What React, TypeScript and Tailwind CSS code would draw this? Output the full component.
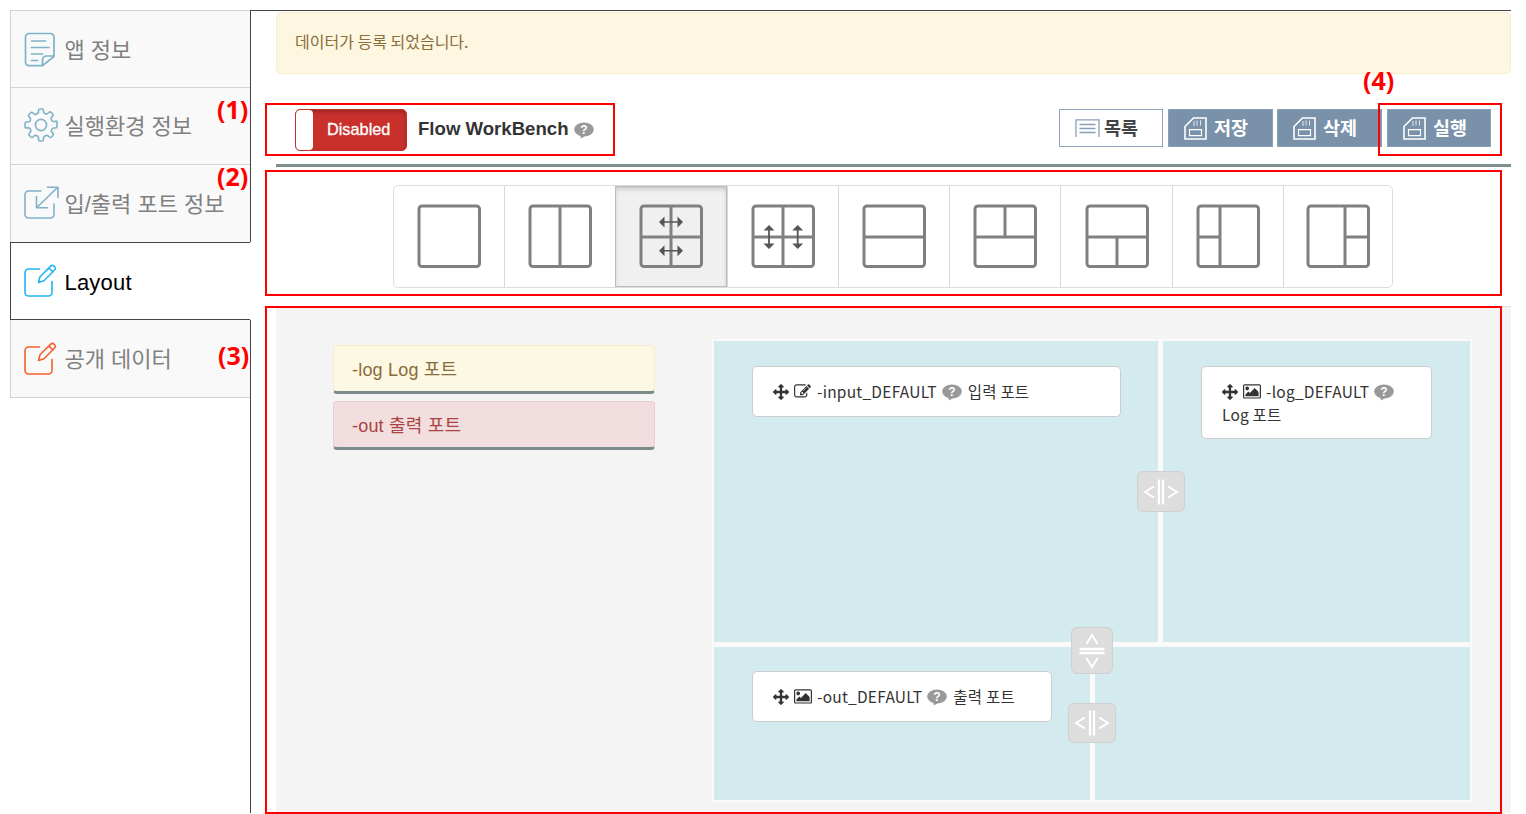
import React from "react";

const KR = "font-['Liberation_Sans','Noto_Sans_CJK_KR',sans-serif]";
const KR2 = "font-['Noto_Sans_CJK_KR',sans-serif]";

function NoteIcon() {
  return (
    <svg width="32" height="36" viewBox="0 0 32 36" fill="none" stroke="#7fb2c8" strokeWidth="1.7" strokeLinecap="round" strokeLinejoin="round" className="mt-[2px]">
      <path d="M30 21V5a3.500 3.500 0 0 0-3.500-3.500H5A3.500 3.500 0 0 0 1.500 5v25A3.500 3.500 0 0 0 5 33.700h13.500L30 24.500V21" />
      <path d="M18.500 33.500v-5.500a4 4 0 0 1 4-4H30" />
      <path d="M7.500 9h14M7.500 15.500h17.500M7.500 22h11M7.500 28.500h6" />
    </svg>
  );
}

function GearIcon() {
  return (
    <svg width="34" height="34" viewBox="0 0 34 34" fill="none" stroke="#7fb2c8" strokeWidth="1.6" strokeLinejoin="round" className="-mt-[2px]">
      <circle cx="17" cy="17" r="5.600" />
      <path d="M14.500 2.500Q14.500 1 16 1h2q1.500 0 1.500 1.500v1.300q.3 1.200 1.500 1.700 1.600.9 2.900-.2l1-1q1-1 2.100 0l1.700 1.700q1 1 0 2.100l-1 1q-1.100 1.300-.2 2.900.5 1.200 1.700 1.500h1.800Q33 12.500 33 14.500v4q0 1.500-1.500 1.500h-1.800q-1.500.3-2 1.500-.9 1.600.2 2.900l1 1q1 1 0 2.100l-1.500 1.500q-1 1-2.100 0l-1-1q-1.300-1.100-2.900-.2-1.500.5-1.900 1.700v2Q19.500 33 18 33h-2q-1.500 0-1.500-1.500v-2q-.4-1.200-1.600-1.700-1.600-.9-2.900.2l-1 1q-1 1-2.100 0l-1.600-1.600q-1-1 0-2.100l1-1q1.100-1.300.2-2.900-.5-1.200-1.700-1.500H2.500Q1 20 1 18.500v-3Q1 14 2.500 14h2q1.200-.3 1.700-1.500.9-1.600-.2-2.900l-1-1q-1-1 0-2.100l1.700-1.700q1-1 2.100 0l1 1q1.300 1.100 2.900.2 1.200-.5 1.800-1.700z" />
    </svg>
  );
}

function PortIcon() {
  return (
    <svg width="36" height="34" viewBox="0 0 36 34" fill="none" stroke="#7fb2c8" strokeWidth="1.600" strokeLinecap="round" strokeLinejoin="round" className="-mt-[2px]">
      <path d="M17 5H4.500A3.500 3.500 0 0 0 1 8.500v20A3.500 3.500 0 0 0 4.500 32h22A3.500 3.500 0 0 0 30 28.500V18" />
      <path d="M33.500 1.500 12.800 21.500M23.500 1.300H34v10M12.500 10.500v11.300h11" />
    </svg>
  );
}

function PencilIcon({ color }: { color: string }) {
  return (
    <svg width="34" height="34" viewBox="0 0 34 34" fill="none" stroke={color} strokeWidth="1.600" strokeLinecap="round" strokeLinejoin="round">
      <path d="M15.500 5H4.500A3.500 3.500 0 0 0 1 8.500v20A3.500 3.500 0 0 0 4.500 32h20a3.500 3.500 0 0 0 3.500-3.500V17.500" />
      <path d="M14.500 18.500 16 12.700 26.700 2.100a2.300 2.300 0 0 1 3.300 0l.6.6a2.300 2.300 0 0 1 0 3.300L20 16.700zM25 4l4 4" />
    </svg>
  );
}

function HelpBubble({ className = "" }: { className?: string }) {
  return (
    <svg width="20" height="17" viewBox="0 0 20 17" className={className}>
      <ellipse cx="10" cy="7.500" rx="9.800" ry="7" fill="#999" />
      <path d="M6 13.500 12 12.500Q10 15.500 6.500 16.500 7.500 15 6 13.500z" fill="#999" />
      <text x="10" y="12" textAnchor="middle" fontFamily="Liberation Sans" fontWeight="700" fontSize="12" fill="#fff">?</text>
    </svg>
  );
}

function MoveIcon() {
  return (
    <svg width="16" height="16" viewBox="0 0 1792 1792" fill="#333">
      <path d="M1792 896q0 26-19 45l-256 256q-19 19-45 19t-45-19-19-45v-128h-384v384h128q26 0 45 19t19 45-19 45l-256 256q-19 19-45 19t-45-19l-256-256q-19-19-19-45t19-45 45-19h128v-384h-384v128q0 26-19 45t-45 19-45-19l-256-256q-19-19-19-45t19-45l256-256q19-19 45-19t45 19 19 45v128h384v-384h-128q-26 0-45-19t-19-45 19-45l256-256q19-19 45-19t45 19l256 256q19 19 19 45t-19 45-45 19h-128v384h384v-128q0-26 19-45t45-19 45 19l256 256q19 19 19 45z" />
    </svg>
  );
}

function ImageIcon() {
  return (
    <svg width="18" height="16.800" viewBox="-64 0 1920 1792" fill="#333">
      <path d="M576 576q0 80-56 136t-136 56-136-56-56-136 56-136 136-56 136 56 56 136zm1024 384v448h-1408v-192l320-320 160 160 512-512zm96-704h-1600q-13 0-22.500 9.500t-9.500 22.500v1216q0 13 9.500 22.500t22.500 9.500h1600q13 0 22.500-9.500t9.500-22.500v-1216q0-13-9.500-22.500t-22.500-9.500zm160 32v1216q0 66-47 113t-113 47h-1600q-66 0-113-47t-47-113v-1216q0-66 47-113t113-47h1600q66 0 113 47t47 113z" />
    </svg>
  );
}

function EditIcon() {
  return (
    <svg width="17" height="17" viewBox="0 0 1792 1792" fill="#333">
      <path d="M888 1184l116-116-152-152-116 116v56h96v96h56zm440-720q-16-16-33 1l-350 350q-17 17-1 33t33-1l350-350q17-17 1-33zm80 594v190q0 119-84.500 203.500t-203.500 84.500h-832q-119 0-203.500-84.500t-84.500-203.500v-832q0-119 84.500-203.500t203.500-84.500h832q63 0 117 25 15 7 18 23 3 17-9 29l-49 49q-14 14-32 8-23-6-45-6h-832q-66 0-113 47t-47 113v832q0 66 47 113t113 47h832q66 0 113-47t47-113v-126q0-13 9-22l64-64q15-15 35-7t20 29zm-96-738l288 288-672 672h-288v-288zm444 132l-92 92-288-288 92-92q28-28 68-28t68 28l152 152q28 28 28 68t-28 68z" />
    </svg>
  );
}

function ListIcon() {
  return (
    <svg width="25" height="18" viewBox="0 0 25 18" fill="none" stroke="#8aa0b8" strokeWidth="1.300">
      <path d="M1 18V.8h23V18" />
      <path d="M4.500 5.500h16M4.500 9.500h16M4.500 13.500h16" />
    </svg>
  );
}

function CardIcon() {
  return (
    <svg width="23" height="23" viewBox="0 0 23 23" fill="none" stroke="#fff" strokeWidth="1.600">
      <path d="M1 22V9.500L9.500 1H22v21z" />
      <path d="M5.500 12.700h12v6h-12z" strokeWidth="1.200" />
      <path d="M10 4v5M13 3.500v5M16.500 3.500v5" strokeWidth="1" opacity=".8" />
    </svg>
  );
}

const layoutPaths = [
  "",
  "M32 2v60",
  "M32 2v60M2 33h60",
  "M32 2v60M2 33h60",
  "M2 33h60",
  "M32 2v31M2 33h60",
  "M2 33h60M32 33v29",
  "M24 2v60M2 33h22",
  "M39 2v60M39 33h23",
];

function LayoutIcon({ index }: { index: number }) {
  return (
    <svg width="64" height="64" viewBox="0 0 64 64" fill="none" stroke="#808080" strokeWidth="3">
      <rect x="2" y="2" width="60.500" height="60.500" rx="3" />
      <path d={layoutPaths[index]} />
      {index === 2 && (
        <g fill="#55555c" stroke="none">
          <path d="M20 18l5.500-5.500v4.700h13v-4.700L44 18l-5.500 5.500v-4.700h-13v4.700z" />
          <path d="M20 46.700l5.500-5.500v4.700h13v-4.700l5.500 5.500-5.500 5.500v-4.700h-13v4.700z" />
        </g>
      )}
      {index === 3 && (
        <g fill="#55555c" stroke="none">
          <path d="M18 21l5.500 5.500h-4.600v13h4.600L18 45l-5.500-5.500h4.600v-13h-4.600z" />
          <path d="M46.700 21l5.500 5.500h-4.600v13h4.600L46.700 45l-5.500-5.500h4.600v-13h-4.600z" />
        </g>
      )}
    </svg>
  );
}

function HandleIcon({ vertical }: { vertical?: boolean }) {
  return (
    <svg width="36" height="26" viewBox="0 0 36 26" fill="none" stroke="#fff" strokeWidth="2" className={vertical ? "shrink-0 rotate-90" : "shrink-0"}>
      <path d="M11 7.500 2 13l9 5.500M25 7.500l9 5.500-9 5.500" />
      <path d="M16 .5v25M20 .5v25" strokeWidth="2.300" />
    </svg>
  );
}

const tabs = [
  { label: "앱 정보", icon: <NoteIcon />, box: "h-[77px] border-t border-l border-[#d3d3d3] bg-[#f9f9f9]", text: "mt-[3px] text-[#808080]" },
  { label: "실행환경 정보", icon: <GearIcon />, box: "h-[77px] border-t border-l border-[#d3d3d3] bg-[#f9f9f9]", text: "mt-[2px] text-[#808080]" },
  { label: "입/출력 포트 정보", icon: <PortIcon />, box: "h-[78px] border-t border-l border-[#d3d3d3] bg-[#f9f9f9]", text: "mt-[2px] text-[#808080]" },
  { label: "Layout", icon: <PencilIcon color="#22b5f0" />, box: "h-[78px] border-y border-l border-[#444] bg-white", text: "mt-[3px] tracking-[.2px] text-black" },
  { label: "공개 데이터", icon: <PencilIcon color="#f4602f" />, box: "h-[78px] border-b border-l border-[#d3d3d3] bg-[#f9f9f9]", text: "mt-[2px] text-[#808080]" },
];

function Sidebar() {
  return (
    <nav className="flex w-[241px] shrink-0 flex-col">
      {tabs.map((t) => (
        <div key={t.label} className="flex">
          <div className={`flex w-[240px] items-center pl-[13px] ${t.box}`}>
            <span className="flex w-[40.5px] shrink-0">{t.icon}</span>
            <span className={`${KR} text-[22px] leading-[30px] font-normal whitespace-nowrap ${t.text}`}>{t.label}</span>
          </div>
          <div className={t.label === "Layout" ? "w-px" : "w-px bg-[#444]"} />
        </div>
      ))}
      <div className="flex-1 border-r border-[#444]" />
    </nav>
  );
}

function ActionButton({ label, className = "" }: { label: string; className?: string }) {
  return (
    <button className={`flex h-[38px] items-center border border-[#8ba1ba] bg-[#7a91aa] pl-[15px] text-white ${className}`}>
      <CardIcon />
      <span className={`${KR2} -mt-[2px] ml-[7px] text-[18.500px] leading-[24px] font-bold`}>{label}</span>
    </button>
  );
}

function Header() {
  return (
    <div className="flex h-[93px] items-start border-b-[3px] border-[#7f8e8e] pt-[35px]">
      <div className="ml-[19px] flex h-[42px] w-[112px] overflow-hidden rounded-[5px] border border-[#c9302c] bg-[#c9302c] shadow-[inset_0_2px_4px_rgba(0,0,0,.25)]">
        <div className="w-[17px] rounded-[4px] bg-white" />
        <div className={`${KR} flex-1 pl-[14px] text-[16.300px] leading-[38px] font-normal text-white [-webkit-text-stroke:.3px_white]`}>Disabled</div>
      </div>
      <div className={`${KR} mt-[7px] ml-[11px] flex items-center text-[18.600px] leading-[26px] font-bold text-[#333]`}>
        Flow WorkBench
        <HelpBubble className="mt-[3px] ml-[6px]" />
      </div>
      <div className="mr-[20px] ml-auto flex">
        <button className="mr-[5px] flex h-[38px] w-[104px] items-center border border-[#8fa3bf] bg-white pl-[15px]">
          <ListIcon />
          <span className={`${KR2} -mt-[2px] ml-[4px] text-[18.500px] leading-[24px] font-bold text-[#444]`}>목록</span>
        </button>
        <ActionButton label="저장" className="mr-[4px] w-[105px]" />
        <ActionButton label="삭제" className="mr-[5px] w-[105px]" />
        <ActionButton label="실행" className="w-[104px]" />
      </div>
    </div>
  );
}

function cellClass(i: number) {
  if (i === 0) return "flex w-[110px] shrink-0 justify-center pt-[18px]";
  if (i === 2)
    return "flex w-[111.3px] shrink-0 justify-center bg-[#f0f0f0] pt-[18px] pl-px shadow-[inset_0_0_0_1px_#bbb,inset_0_3px_5px_rgba(0,0,0,.18)]";
  if (i === 8) return "flex flex-1 justify-center border-l border-[#d8d8d8] pt-[18px]";
  return "flex w-[111.3px] shrink-0 justify-center border-l border-[#d8d8d8] pt-[18px]";
}

function LayoutPicker() {
  return (
    <div className="mt-[18px] ml-[117px] flex h-[103px] w-[1000px] overflow-hidden rounded-[5px] border border-[#ddd]">
      {layoutPaths.map((_, i) => (
        <div key={i} className={cellClass(i)}>
          <LayoutIcon index={i} />
        </div>
      ))}
    </div>
  );
}

function PortCard({ icon, name, title, className }: { icon: React.ReactNode; name: string; title: string; className: string }) {
  return (
    <div className={`${KR2} flex flex-wrap content-start items-center rounded-[5px] border border-[#ccc] bg-white pt-[13px] pl-[20px] text-[15.500px] leading-[24px] font-normal text-[#333] ${className}`}>
      <MoveIcon />
      <span className="ml-[5px] flex w-[19px]">{icon}</span>
      <span className="-mt-px ml-[4px] tracking-[.25px]">{name}</span>
      <HelpBubble className="mt-px mr-[6px] ml-[5px]" />
      <span className="-mt-px tracking-[.2px]">{title}</span>
    </div>
  );
}

const handle = "absolute z-10 flex items-center justify-center overflow-hidden rounded-[6px] border border-[#d0d0d0] bg-[#ddd]";

function Board() {
  return (
    <div className="relative mt-[31px] ml-[57px] flex h-[463px] w-[760px] flex-col gap-[5px] border-2 border-[#fafafa] bg-[#fafafa]">
      <div className="flex h-[301px] gap-[5px]">
        <div className="w-[444px] bg-[#d3ebee] pt-[25px] pl-[38px]">
          <PortCard icon={<EditIcon />} name="-input_DEFAULT" title="입력 포트" className="h-[51px] w-[369px]" />
        </div>
        <div className="flex-1 bg-[#d3ebee] pt-[25px] pl-[38px]">
          <PortCard icon={<ImageIcon />} name="-log_DEFAULT" title="Log 포트" className="h-[73px] w-[231px]" />
        </div>
      </div>
      <div className="flex flex-1 gap-[5px]">
        <div className="w-[376px] bg-[#d3ebee] pt-[24px] pl-[38px]">
          <PortCard icon={<ImageIcon />} name="-out_DEFAULT" title="출력 포트" className="h-[51px] w-[300px]" />
        </div>
        <div className="flex-1 bg-[#d3ebee]" />
      </div>
      <div className={`${handle} top-[130px] left-[423px] h-[41px] w-[48px]`}><HandleIcon /></div>
      <div className={`${handle} top-[286px] left-[357px] h-[47px] w-[42px]`}><HandleIcon vertical /></div>
      <div className={`${handle} top-[362px] left-[354px] h-[40px] w-[48px]`}><HandleIcon /></div>
    </div>
  );
}

function Workbench() {
  return (
    <div className="mt-[18px] flex h-[507px] border-t border-[#ddd] bg-[#f4f4f4] pt-px">
      <div className={`${KR} mt-[37px] ml-[57px] flex w-[322px] flex-col gap-[7px] text-[18px] leading-[24px] tracking-[.2px]`}>
        <div className="h-[49px] rounded-[4px] border border-b-[3px] border-[#faebcc] border-b-[#7b8b8b] bg-[#fcf8e3] pt-[12px] pl-[18px] text-[#8a6d3b]">-log Log 포트</div>
        <div className="h-[49px] rounded-[4px] border border-b-[3px] border-[#ebccd1] border-b-[#7b8b8b] bg-[#f2dede] pt-[12px] pl-[18px] text-[#a94442]">-out 출력 포트</div>
      </div>
      <Board />
    </div>
  );
}

const marks = [
  { text: "(1)", frame: "top-[103px] left-[265px] h-[53px] w-[350px]", label: "top-[92px] left-[217px]" },
  { text: "(2)", frame: "top-[170px] left-[265px] h-[126px] w-[1237px]", label: "top-[159px] left-[217px]" },
  { text: "(3)", frame: "top-[306px] left-[265px] h-[508px] w-[1237px]", label: "top-[338px] left-[218px]" },
  { text: "(4)", frame: "top-[103px] left-[1378px] h-[53px] w-[124px]", label: "top-[63px] left-[1363px]" },
];

export default function App() {
  return (
    <div className="relative flex h-[814px] w-[1526px] overflow-hidden bg-white pt-[10px] pb-px pl-[10px]">
      <Sidebar />
      <main className="flex w-[1260px] flex-col border-t border-[#444] pl-[25px]">
        <div className={`${KR2} mt-px h-[62px] shrink-0 rounded-[5px] border border-[#faebcc] bg-[#fdf7e2] pt-[17px] pl-[18px] text-[16px] leading-[22px] text-[#8a6d3b]`}>
          데이터가 등록 되었습니다.
        </div>
        <Header />
        <LayoutPicker />
        <Workbench />
      </main>
      {marks.map((m) => (
        <React.Fragment key={m.text}>
          <div className={`pointer-events-none absolute z-20 border-2 border-[#f00] ${m.frame}`} />
          <div className={`absolute z-20 font-['Open_Sans',sans-serif] text-[25px] leading-[34px] font-bold text-[#f00] ${m.label}`}>{m.text}</div>
        </React.Fragment>
      ))}
    </div>
  );
}
